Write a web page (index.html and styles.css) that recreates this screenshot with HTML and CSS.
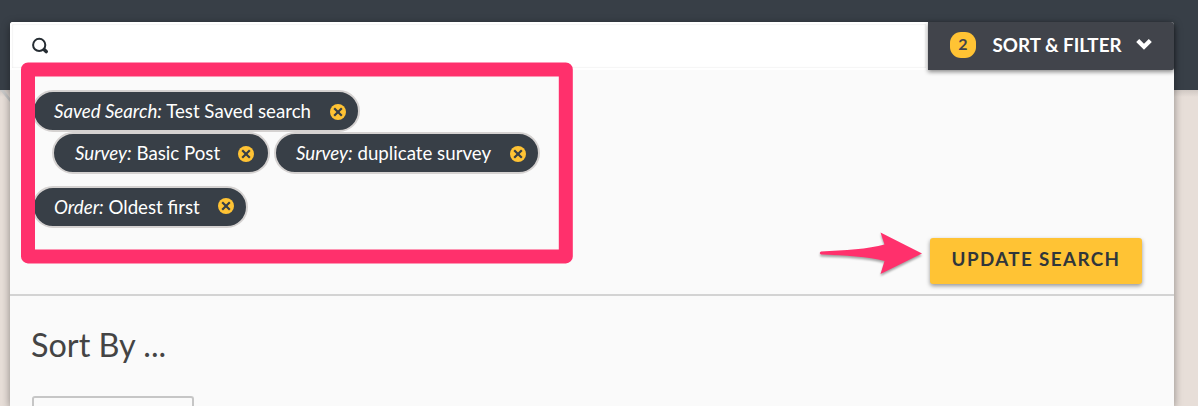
FILE: index.html
```
<!DOCTYPE html>
<html lang="en">
<head>
<meta charset="utf-8">
<title>Search filters</title>
<link rel="stylesheet" href="styles.css">
</head>
<body>
<svg class="corner" viewBox="0 0 10 14"><path d="M0 0H4L10 8V12Z" fill="#c8c8c8"/></svg>
<main class="panel">
  <header class="searchbar">
    <div class="search-field">
      <svg class="search-icon" viewBox="0 0 18 18"><circle cx="7.2" cy="7.9" r="6.1" fill="none" stroke="#262d33" stroke-width="2"/><path d="M12.3 12.7L14.2 14.5" stroke="#262d33" stroke-width="3.6" stroke-linecap="round"/></svg>
    </div>
    <button class="filter-toggle">
      <span class="count">2</span>
      <span class="toggle-label">SORT &amp; FILTER</span>
      <svg class="chevron" viewBox="0 0 16 12"><path d="M1.7 2.5L8 8.7L14.3 2.5" fill="none" stroke="#fff" stroke-width="4.3"/></svg>
    </button>
  </header>
  <section class="active-filters">
    <div class="filters">
      <div class="row"><span class="pill saved"><span class="pill-text"><em>Saved Search:</em> Test Saved search</span><svg class="remove" viewBox="0 0 16 16"><circle cx="8" cy="8" r="8"/><path d="M4.2 4.2l7.6 7.6M11.8 4.2l-7.6 7.6"/></svg></span></div>
      <div class="row nested"><span class="pill basic"><span class="pill-text"><em>Survey:</em> Basic Post</span><svg class="remove" viewBox="0 0 16 16"><circle cx="8" cy="8" r="8"/><path d="M4.2 4.2l7.6 7.6M11.8 4.2l-7.6 7.6"/></svg></span><span class="pill duplicate"><span class="pill-text"><em>Survey:</em> duplicate survey</span><svg class="remove" viewBox="0 0 16 16"><circle cx="8" cy="8" r="8"/><path d="M4.2 4.2l7.6 7.6M11.8 4.2l-7.6 7.6"/></svg></span></div>
      <div class="row order"><span class="pill oldest"><span class="pill-text"><em>Order:</em> Oldest first</span><svg class="remove raised" viewBox="0 0 16 16"><circle cx="8" cy="8" r="8"/><path d="M4.2 4.2l7.6 7.6M11.8 4.2l-7.6 7.6"/></svg></span></div>
    </div>
    <button class="update">UPDATE SEARCH</button>
  </section>
  <section class="sort">
    <h2>Sort By ...</h2>
    <div class="select"></div>
  </section>
</main>
<svg class="highlight" viewBox="0 0 560 210"><rect x="8" y="9.4" width="537.8" height="187" fill="none" stroke="#ff306c" stroke-width="14" stroke-linejoin="round"/></svg>
<svg class="arrow" viewBox="0 0 110 50"><path d="M2 21.5C25 20.5 50 19 65.5 14.5L61.5 2.5L103 23.5L61.5 44L65.5 31C50 26.5 25 25.5 2 24.5Q-.5 23 2 21.5Z" fill="#ff306c"/></svg>
</body>
</html>
```
FILE: styles.css
```
* { box-sizing: border-box; }
body {
  margin: 0;
  height: 406px;
  overflow: hidden;
  padding: 22px 24px 0 10px;
  background: linear-gradient(#383f47 90px, #d0c8c3 90px, #e7ded8 97px);
  font-family: Lato, sans-serif;
  color: #444;
}
.corner { position: absolute; left: 0; top: 90px; width: 10px; height: 14px; }
.panel {
  position: relative;
  height: 384px;
  background: #fafafa;
  border-radius: 3px 3px 0 0;
  box-shadow: 0 2px 8px rgba(0,0,0,.4);
}
.searchbar { display: flex; height: 48px; }
.search-field {
  flex: 1;
  padding: 13px 20px;
  background: #fff;
  border: 2px solid #fff;
  border-radius: 3px 0 0 0;
  box-shadow: inset 0 0 2px #ddd;
}
.search-icon { display: block; width: 18px; height: 18px; }
button { border: 0; font-family: inherit; }
.filter-toggle {
  display: flex;
  align-items: center;
  width: 246px;
  padding: 0 22px;
  background: #41444b;
  color: #fff;
  border-radius: 0 3px 2px 0;
  box-shadow: 0 2px 4px rgba(0,0,0,.45);
}
.count {
  width: 26px;
  height: 26px;
  margin-top: -3px;
  border-radius: 11px;
  background: #ffc334;
  color: #41444b;
  font: 700 16px/24px Lato, sans-serif;
  text-align: center;
}
.toggle-label {
  width: 130px;
  margin: -3px 0 0 16px;
  font-size: 18.8px;
  font-weight: 700;
  white-space: nowrap;
}
.chevron { width: 16px; height: 12px; margin: -5px 0 0 14px; }
.active-filters {
  display: flex;
  justify-content: space-between;
  align-items: flex-end;
  height: 226px;
  padding: 20px 32px 10px 22px;
  border-bottom: 2px solid #d3d3d3;
}
.filters { align-self: flex-start; }
.row { display: flex; gap: 4px; }
.nested { padding-left: 20px; }
.order { margin-top: 12px; }
.pill {
  display: flex;
  align-items: center;
  justify-content: space-between;
  height: 42px;
  padding: 0 12px 0 20px;
  border: 2px solid #d5d2d1;
  border-radius: 21px;
  background: #383f47;
  color: #fff;
  font-size: 18.7px;
  line-height: 24px;
  white-space: nowrap;
}
.saved { width: 328px; }
.basic { width: 218px; padding-left: 21px; padding-right: 14px; }
.duplicate { width: 266px; }
.oldest { width: 216px; }
.remove { width: 16px; height: 16px; margin-top: 1px; }
.remove circle { fill: #ffc334; }
.remove path { fill: none; stroke: #383f47; stroke-width: 2.2; }
.raised { margin-top: -2px; }
.update {
  width: 212px;
  height: 46px;
  padding: 0 0 5px;
  border-radius: 3px;
  background: #ffc334;
  color: #30363b;
  box-shadow: 0 2px 4px rgba(0,0,0,.4);
  font-size: 18.8px;
  font-weight: 700;
  letter-spacing: 1.4px;
}
.sort { height: 110px; padding: 29px 21px 0; overflow: hidden; }
h2 { margin: 0; font-size: 32.4px; font-weight: 400; line-height: 40px; }
.select {
  width: 162px;
  height: 10px;
  margin: 31px 0 0 1px;
  border: 2px solid #c6c6c6;
  border-bottom: 0;
  border-radius: 3px 3px 0 0;
}
.highlight {
  position: absolute;
  left: 20px;
  top: 60px;
  width: 560px;
  height: 210px;
}
.arrow {
  position: absolute;
  left: 819px;
  top: 230px;
  width: 110px;
  height: 50px;
  filter: drop-shadow(0 2px 1px rgba(0,0,0,.35));
}
```
